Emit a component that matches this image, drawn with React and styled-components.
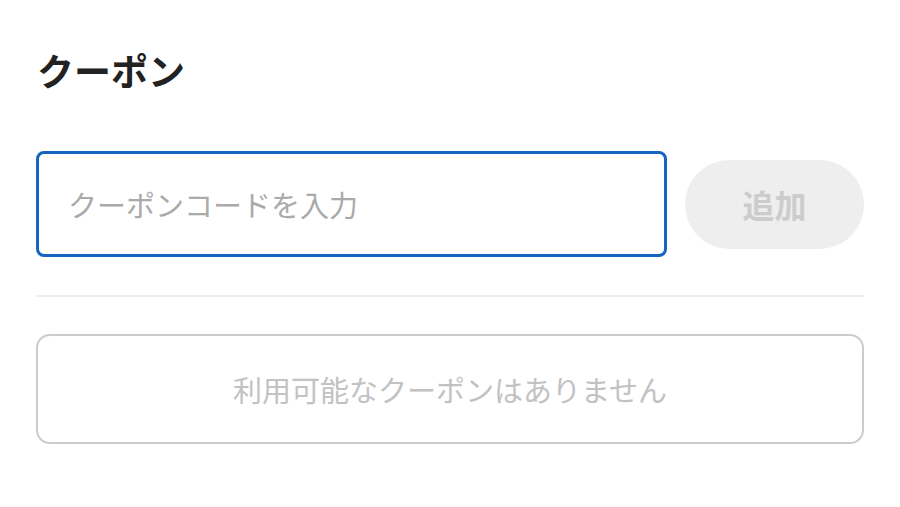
import React from 'react';
import styled, { createGlobalStyle } from 'styled-components';

const Global = createGlobalStyle`
  body {
    margin: 0;
    background: #fff;
    font-family: 'Noto Sans CJK JP', 'Noto Sans', sans-serif;
  }
`;

const Page = styled.div`
  padding: 44px 36px 0;
  display: flex;
  flex-direction: column;
`;

const Title = styled.h2`
  margin: 0 0 55px 1px;
  font-size: 37px;
  line-height: 52px;
  font-weight: 700;
  color: #222;
`;

const Row = styled.div`
  display: flex;
  align-items: center;
  gap: 18px;
`;

const Input = styled.input`
  flex: 1;
  height: 106px;
  box-sizing: border-box;
  border: 3px solid #1565c0;
  border-radius: 8px;
  padding: 0 29px;
  font-family: inherit;
  font-size: 29px;
  color: #222;
  outline: none;
  &::placeholder {
    color: #aaa;
  }
`;

const AddButton = styled.button`
  width: 179px;
  height: 89px;
  border: none;
  border-radius: 45px;
  background: #eee;
  color: #ccc;
  font-family: inherit;
  font-size: 32px;
  font-weight: 700;
`;

const Divider = styled.hr`
  margin: 38px 0 37px;
  border: none;
  border-top: 2px solid #eee;
`;

const Empty = styled.div`
  height: 110px;
  box-sizing: border-box;
  border: 2px solid #ccc;
  border-radius: 14px;
  display: flex;
  align-items: center;
  justify-content: center;
  font-size: 29px;
  color: #c2c2c2;
`;

export default function App() {
  return (
    <Page>
      <Global />
      <Title>クーポン</Title>
      <Row>
        <Input placeholder='クーポンコードを入力' />
        <AddButton disabled>追加</AddButton>
      </Row>
      <Divider />
      <Empty>利用可能なクーポンはありません</Empty>
    </Page>
  );
}
